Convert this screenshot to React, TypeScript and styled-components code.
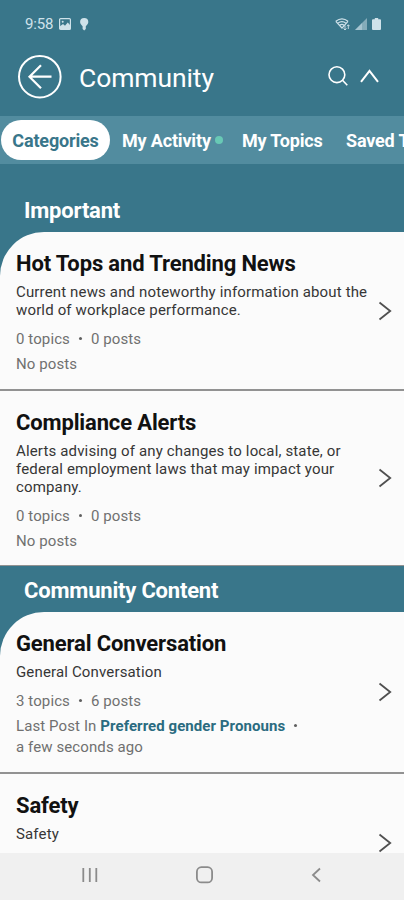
import React from "react";
import styled, { createGlobalStyle } from "styled-components";

const Global = createGlobalStyle`
  * { box-sizing: border-box; }
  body { margin: 0; background: #39768a; }
`;

const teal = "#39768a";

const Screen = styled.div`
  display: flex;
  flex-direction: column;
  width: 404px;
  height: 900px;
  overflow: hidden;
  background: ${teal};
  font-family: Roboto, "Liberation Sans", sans-serif;
`;

const StatusBar = styled.div`
  flex: none;
  display: flex;
  justify-content: space-between;
  align-items: center;
  height: 48px;
  padding: 0 23px 0 25px;
  color: #cfe2ea;
`;

const StatusGroup = styled.div<{ $gap: number }>`
  display: flex;
  align-items: center;
  gap: ${(p) => p.$gap}px;
`;

const Clock = styled.span`
  font-size: 15px;
  line-height: 18px;
  width: 28px;
  letter-spacing: -0.2px;
  margin-right: -3px;
  white-space: nowrap;
`;

const Header = styled.header`
  flex: none;
  display: flex;
  align-items: center;
  height: 68px;
  padding: 0 25px 12px 17px;
  color: #fff;
`;

const IconButton = styled.button`
  display: flex;
  padding: 0;
  border: 0;
  background: none;
  color: inherit;
`;

const PageTitle = styled.h1`
  flex: 1;
  margin: 3px 0 0 17px;
  font-size: 26.5px;
  line-height: 32px;
  font-weight: 400;
  letter-spacing: -0.1px;
`;

const HeaderActions = styled.div`
  display: flex;
  align-items: center;
  gap: 12px;
`;

const Tabs = styled.nav`
  flex: none;
  display: flex;
  align-items: center;
  height: 48px;
  background: #528c9f;
  overflow: hidden;
`;

const Tab = styled.button<{ $active?: boolean; $width: number }>`
  flex: none;
  display: flex;
  align-items: center;
  justify-content: ${(p) => (p.$active ? "center" : "flex-start")};
  width: ${(p) => p.$width}px;
  height: 40px;
  margin-left: ${(p) => (p.$active ? "1px" : "0")};
  margin-right: ${(p) => (p.$active ? "12px" : "0")};
  padding: 2px 0 0;
  border: 0;
  border-radius: 20px;
  background: ${(p) => (p.$active ? "#fff" : "transparent")};
  color: ${(p) => (p.$active ? teal : "#fff")};
  font: 700 18px/22px Roboto, "Liberation Sans", sans-serif;
  letter-spacing: -0.17px;
  white-space: nowrap;
`;

const UnreadDot = styled.span`
  width: 8px;
  height: 8px;
  margin: -2px 0 0 4px;
  border-radius: 50%;
  background: #68c9b5;
`;

const Content = styled.main`
  flex: 1;
  min-height: 0;
  overflow: hidden;
`;

const SectionTitle = styled.h2<{ $height: number }>`
  display: flex;
  align-items: flex-end;
  height: ${(p) => p.$height}px;
  margin: 0;
  padding: 0 24px 8px;
  color: #fff;
  font-size: 22px;
  line-height: 26px;
  font-weight: 700;
  letter-spacing: -0.2px;
`;

const CardList = styled.div`
  overflow: hidden;
  border-top-left-radius: 44px;
  background: #fbfbfb;
`;

const Row = styled.article<{ $height: number; $line: number }>`
  display: flex;
  align-items: center;
  justify-content: space-between;
  height: ${(p) => p.$height}px;
  padding: 0 12px 0 16px;
  border-bottom: ${(p) => p.$line}px solid #929292;
`;

const RowText = styled.div`
  align-self: flex-start;
  width: 358px;
  padding-top: 19px;
  white-space: nowrap;
`;

const RowTitle = styled.h3`
  margin: 0 0 6px;
  color: #111;
  font-size: 22px;
  line-height: 26px;
  font-weight: 700;
  letter-spacing: -0.14px;
`;

const Description = styled.p`
  margin: 0 0 10px;
  color: #363636;
  font-size: 15px;
  line-height: 18px;
  letter-spacing: 0.15px;
`;

const Meta = styled.p`
  margin: 0 0 4px;
  color: #707070;
  font-size: 15px;
  line-height: 21px;
  letter-spacing: 0.1px;
`;

const Bullet = styled.span`
  display: inline-block;
  width: 3px;
  height: 3px;
  margin: 0 9px 4px;
  border-radius: 50%;
  background: #606060;
`;

const TopicLink = styled.a`
  color: #2a6b80;
  font-weight: 700;
  letter-spacing: 0.07px;
`;

const NavBar = styled.footer`
  flex: none;
  display: flex;
  align-items: center;
  justify-content: space-between;
  height: 47px;
  padding: 0 81px 3px;
  background: #f0f0f0;
  color: #8b8b8b;
`;

const Chevron = () => (
  <svg width="14" height="20" viewBox="0 0 14 20" fill="none" stroke="#505050" strokeWidth="1.8">
    <path d="M1.5 1.5 12.2 10 1.5 18.5" />
  </svg>
);

type Category = {
  title: string;
  lines: string[];
  height: number;
  line: number;
  stats?: { topics: number; posts: number; lastTopic?: string };
};

const important: Category[] = [
  {
    title: "Hot Tops and Trending News",
    lines: ["Current news and noteworthy information about the", "world of workplace performance."],
    stats: { topics: 0, posts: 0 },
    height: 159,
    line: 2,
  },
  {
    title: "Compliance Alerts",
    lines: ["Alerts advising of any changes to local, state, or", "federal employment laws that may impact your", "company."],
    stats: { topics: 0, posts: 0 },
    height: 175,
    line: 1,
  },
];

const community: Category[] = [
  {
    title: "General Conversation",
    lines: ["General Conversation"],
    stats: { topics: 3, posts: 6, lastTopic: "Preferred gender Pronouns" },
    height: 162,
    line: 2,
  },
  { title: "Safety", lines: ["Safety"], height: 139, line: 2 },
];

const CategoryRow = ({ item }: { item: Category }) => (
  <Row $height={item.height} $line={item.line}>
    <RowText>
      <RowTitle>{item.title}</RowTitle>
      <Description>
        {item.lines.map((line) => (
          <React.Fragment key={line}>
            {line}
            <br />
          </React.Fragment>
        ))}
      </Description>
      {item.stats && (
        <>
          <Meta>
            {item.stats.topics} topics
            <Bullet />
            {item.stats.posts} posts
          </Meta>
          {item.stats.lastTopic ? (
            <Meta>
              Last Post In <TopicLink>{item.stats.lastTopic}</TopicLink>
              <Bullet />
              <br />a few seconds ago
            </Meta>
          ) : (
            <Meta>No posts</Meta>
          )}
        </>
      )}
    </RowText>
    <Chevron />
  </Row>
);

export default function App() {
  return (
    <Screen>
      <Global />
      <StatusBar>
        <StatusGroup $gap={9}>
          <Clock>9:58</Clock>
          <svg width="12" height="12" viewBox="0 0 12 12">
            <rect x=".6" y=".6" width="10.8" height="10.8" rx="1" fill="none" stroke="currentColor" strokeWidth="1.2" />
            <path d="M1 11V8.3L4 6l2 1.8L8.7 4.5 11 7v4z" fill="currentColor" />
            <circle cx="3.7" cy="3.7" r="1" fill="currentColor" />
          </svg>
          <svg width="9" height="13" viewBox="0 0 9 13" fill="currentColor">
            <path d="M4.2 0a4.1 4.1 0 0 1 4.1 4.1C8.3 6 7 7 5.8 8.2V11L4.2 12.5 2.6 11V8.2C1.4 7 .1 6 .1 4.1A4.1 4.1 0 0 1 4.2 0z" />
          </svg>
        </StatusGroup>
        <StatusGroup $gap={5}>
          <svg width="15" height="13" viewBox="0 0 15 13" fill="none" stroke="currentColor" strokeWidth="1.2">
            <path d="M.8 3.3Q7 -1.5 13 3.3M2.8 5.2Q7 2 11 5.2M4.8 7.2Q7 5.5 9 7.2M.8 3.3 7 10l2.2-2.3L13 3.3" />
            <path d="M10 7.5v4.5M8.5 10.5 10 12l1.5-1.5M13.3 11V6.8M12 8.2l1.3-1.4 1.3 1.4" strokeWidth=".9" />
          </svg>
          <svg width="12" height="12" viewBox="0 0 12 12" fill="currentColor">
            <path d="M12 0v12H0z" opacity=".5" />
            <path d="M7 5v7H0z" opacity=".45" />
          </svg>
          <svg width="9" height="12" viewBox="0 0 9 12" fill="currentColor">
            <path d="M2.8 0h3.4v1.3H8q1 0 1 1V11q0 1-1 1H1q-1 0-1-1V2.3q0-1 1-1h1.8z" />
          </svg>
        </StatusGroup>
      </StatusBar>
      <Header>
        <IconButton aria-label="Back">
          <svg width="45" height="45" viewBox="0 0 45 45" fill="none" stroke="currentColor" strokeWidth="2">
            <circle cx="22.8" cy="22.7" r="20.8" />
            <path d="M34.5 22.7H12.5M24 11.2l-11.5 11.5L24 34.2" strokeWidth="2.2" />
          </svg>
        </IconButton>
        <PageTitle>Community</PageTitle>
        <HeaderActions>
          <IconButton aria-label="Search">
            <svg width="20" height="20" viewBox="0 0 20 20" fill="none" stroke="currentColor" strokeWidth="1.6">
              <circle cx="8.9" cy="8.7" r="7.9" />
              <path d="m14.5 14.3 4.8 5" />
            </svg>
          </IconButton>
          <IconButton aria-label="Collapse">
            <svg width="19" height="14" viewBox="0 0 19 14" fill="none" stroke="currentColor" strokeWidth="2">
              <path d="m1 12.8 8.5-11 8.5 11" />
            </svg>
          </IconButton>
        </HeaderActions>
      </Header>
      <Tabs>
        <Tab $active $width={109}>Categories</Tab>
        <Tab $width={120}>
          My Activity
          <UnreadDot />
        </Tab>
        <Tab $width={104}>My Topics</Tab>
        <Tab $width={120}>Saved Topics</Tab>
      </Tabs>
      <Content>
        <SectionTitle $height={68}>Important</SectionTitle>
        <CardList>
          {important.map((item) => (
            <CategoryRow key={item.title} item={item} />
          ))}
        </CardList>
        <SectionTitle $height={46}>Community Content</SectionTitle>
        <CardList>
          {community.map((item) => (
            <CategoryRow key={item.title} item={item} />
          ))}
        </CardList>
      </Content>
      <NavBar>
        <svg width="18" height="16" viewBox="0 0 18 16" stroke="currentColor" strokeWidth="1.8">
          <path d="M2.3 1v14M8.8 1v14M15.3 1v14" />
        </svg>
        <svg width="18" height="18" viewBox="0 0 18 18" fill="none" stroke="currentColor" strokeWidth="1.8">
          <rect x=".9" y="1.2" width="15.2" height="15.2" rx="4.5" />
        </svg>
        <svg width="12" height="16" viewBox="0 0 12 16" fill="none" stroke="currentColor" strokeWidth="1.8">
          <path d="M9 1.5 2 8l7 6.5" />
        </svg>
      </NavBar>
    </Screen>
  );
}
